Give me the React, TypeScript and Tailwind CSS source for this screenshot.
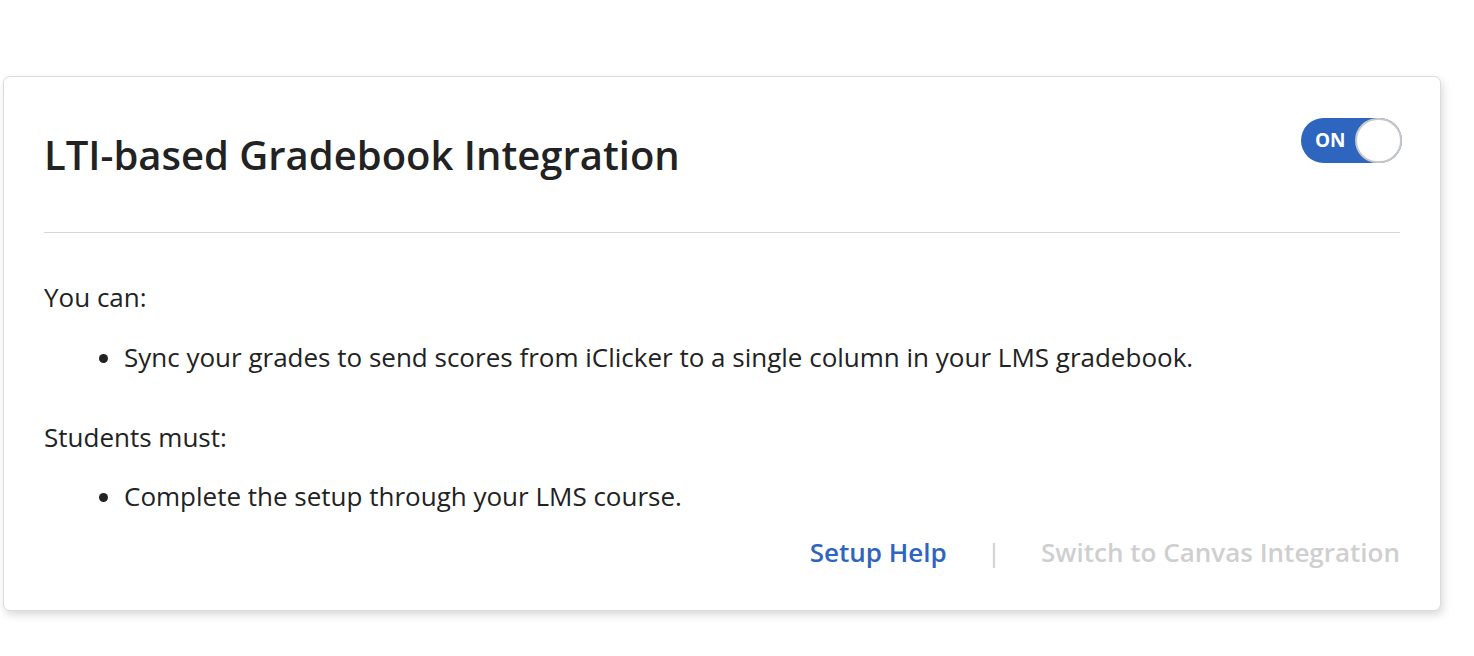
import React from "react";

export default function App() {
  return (
    <div className="w-[1474px] h-[656px] bg-white pt-[76px] pl-[3px]" style={{ fontFamily: '"Open Sans", sans-serif' }}>
      <div className="w-[1438px] h-[535px] rounded-[7px] border border-[#dcdcdc] bg-white shadow-[2px_4px_8px_rgba(0,0,0,0.15)] px-[40px] text-[#222]">
        <div className="flex items-start justify-between pt-[41px] pb-[53px] border-b border-[#d6d6d6]">
          <h1 className="text-[40px] leading-[48px] font-semibold mt-[13px] text-[#222]">LTI-based Gradebook Integration</h1>
          <div className="relative w-[101px] h-[45px] rounded-full bg-[#2d65bf] flex items-center mr-[-2px]">
            <span className="text-white font-bold text-[19px] pl-[14px]">ON</span>
            <div className="absolute right-0 top-0 w-[47px] h-[45px] rounded-full bg-white border-2 border-[#c8c8c8]"></div>
          </div>
        </div>
        <div className="pt-[49px] text-[26px] leading-[30px]">
          <p>You can:</p>
          <ul className="list-disc pl-[80px] mt-[30px]">
            <li>Sync your grades to send scores from iClicker to a single column in your LMS gradebook.</li>
          </ul>
          <p className="mt-[50px]">Students must:</p>
          <ul className="list-disc pl-[80px] mt-[29px]">
            <li>Complete the setup through your LMS course.</li>
          </ul>
        </div>
        <div className="flex justify-end items-center mt-[25px] text-[26px] font-semibold leading-[32px]">
          <span className="text-[#2d65bf]">Setup Help</span>
          <span className="text-[#cfcfcf] font-normal mx-[40px]">|</span>
          <span className="text-[#cfcfcf]">Switch to Canvas Integration</span>
        </div>
      </div>
    </div>
  );
}
